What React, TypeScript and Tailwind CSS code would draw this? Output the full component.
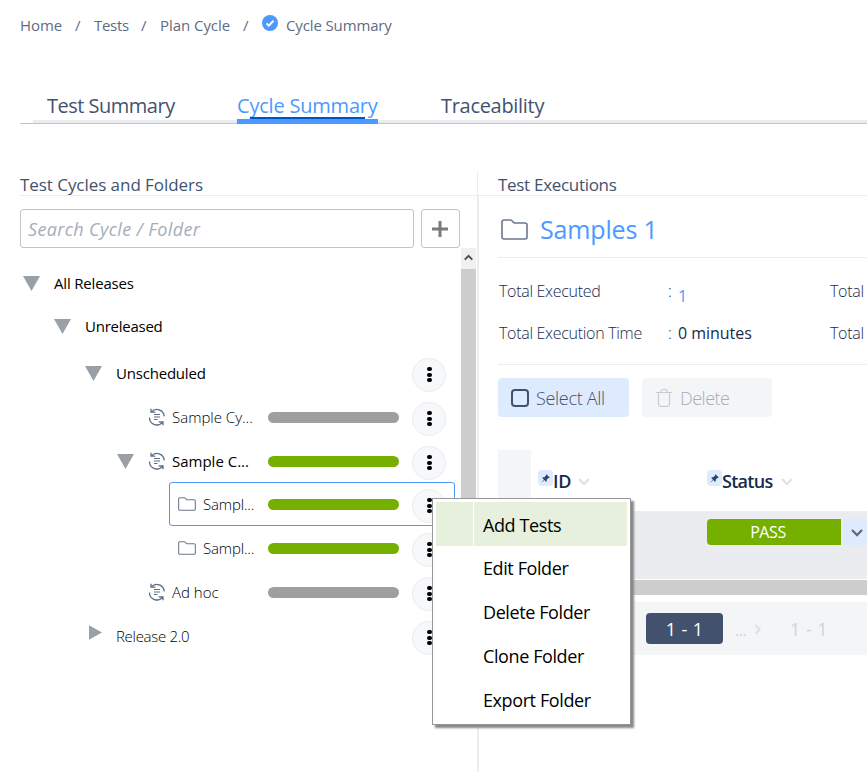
import React from 'react';
import { BsPinAngleFill } from 'react-icons/bs';

type Kind = 'plain' | 'cycle' | 'folder';

interface TreeRow {
  label: string;
  kind: Kind;
  row: string;
  text: string;
  arrow?: 'down' | 'right';
  bar?: string;
  menu?: boolean;
  selected?: boolean;
}

const rows: TreeRow[] = [
  { label: 'All Releases', kind: 'plain', arrow: 'down', row: 'h-11 pl-[23px]', text: 'tracking-[-0.18px]' },
  { label: 'Unreleased', kind: 'plain', arrow: 'down', row: 'h-[42px] pl-[54px]', text: 'tracking-[-0.25px]' },
  { label: 'Unscheduled', kind: 'plain', arrow: 'down', row: 'mt-1 h-11 pl-[85px]', text: 'tracking-[-0.2px]', menu: true },
  { label: 'Sample Cy...', kind: 'cycle', row: 'h-11 pl-[117px]', text: 'font-light', bar: 'bg-[#9f9f9f]', menu: true },
  { label: 'Sample C...', kind: 'cycle', arrow: 'down', row: 'h-11 pl-[117px]', text: '', bar: 'bg-[#75b000]', menu: true },
  { label: 'Sampl...', kind: 'folder', row: '-mt-px h-11 pl-[148px]', text: 'font-light tracking-[-0.15px]', bar: 'bg-[#75b000]', menu: true, selected: true },
  { label: 'Sampl...', kind: 'folder', row: 'h-11 pl-[148px]', text: 'font-light tracking-[-0.15px]', bar: 'bg-[#75b000]', menu: true },
  { label: 'Ad hoc', kind: 'cycle', row: 'h-11 pl-[117px]', text: 'font-light', bar: 'bg-[#9f9f9f]', menu: true },
  { label: 'Release 2.0', kind: 'plain', arrow: 'right', row: 'h-11 pl-[85px]', text: 'font-light tracking-[-0.3px]', menu: true },
];

const menuItems = ['Add Tests', 'Edit Folder', 'Delete Folder', 'Clone Folder', 'Export Folder'];

const FolderIcon: React.FC<{ className: string; stroke: number }> = ({ className, stroke }) => (
  <svg className={className} viewBox="0 0 27 21" fill="none" stroke="#6b778c" strokeWidth={stroke} strokeLinejoin="round">
    <path d="M1 3a2 2 0 0 1 2-2h6.500c1 0 1.500.5 2 1.300l.8 1c.5.600 1 .7 1.700.7H24a2 2 0 0 1 2 2v12a2 2 0 0 1-2 2H3a2 2 0 0 1-2-2z" />
  </svg>
);

const CycleIcon: React.FC = () => (
  <svg className="h-[18px] w-[18px] shrink-0" viewBox="0 0 18 18" fill="none" stroke="#5e6c84" strokeWidth="1.3">
    <path d="M3 .8v3.400h4.400M3.300 4.100A7.300 7.300 0 0 1 16.200 8.400M15 17.200v-3.400h-4.400M14.700 13.900A7.300 7.300 0 0 1 1.500 9.500" />
    <path d="M6 6.500h6M6 9h6M6 11.500h3.500" strokeWidth="1.200" />
  </svg>
);

const Arrow: React.FC<{ dir?: 'down' | 'right' }> = ({ dir }) => (
  <span className="flex w-[17px] shrink-0 justify-center">
    {dir === 'down' && (
      <svg className="h-[15px] w-[17px]" viewBox="0 0 17 15" fill="#9aa0a6"><path d="M0 0h17L8.500 15z" /></svg>
    )}
    {dir === 'right' && (
      <svg className="-mt-2 ml-1 h-[17px] w-[15px]" viewBox="0 0 15 17" fill="#9aa0a6"><path d="M0 0v17l15-8.500z" /></svg>
    )}
  </span>
);

const Chevron: React.FC<{ className: string; color: string; d?: string; width?: number }> = ({
  className,
  color,
  d = 'M1 2l5 5 5-5',
  width = 2,
}) => (
  <svg className={className} viewBox="0 0 12 9" fill="none" stroke={color} strokeWidth={width}>
    <path d={d} />
  </svg>
);

const Pin: React.FC = () => (
  <span className="-mt-1.5 flex h-4 w-[15px] shrink-0 items-center justify-center rounded-sm bg-[#deebff]">
    <BsPinAngleFill className="h-[9px] w-[9px] text-[#344563]" />
  </span>
);

const TreeItem: React.FC<{ item: TreeRow }> = ({ item }) => (
  <div className={`relative flex items-center ${item.row}`}>
    {item.selected && <div className="absolute inset-y-0 left-[169px] w-[286px] rounded-[3px] border border-[#4c9aff]" />}
    <Arrow dir={item.arrow} />
    {item.kind === 'plain' && <span className="w-[14px] shrink-0" />}
    {item.kind === 'cycle' && <span className="ml-[14px] mr-1.5 shrink-0"><CycleIcon /></span>}
    {item.kind === 'folder' && <FolderIcon className="ml-[13px] mr-[7px] h-[14px] w-[18px] shrink-0" stroke={1.6} />}
    <span className={`whitespace-nowrap text-[15px] text-black ${item.text}`}>{item.label}</span>
    <div className="ml-auto flex items-center pr-[31px]">
      {item.bar && <div className={`mr-[13px] h-[11px] w-[131px] rounded-full ${item.bar}`} />}
      {item.menu && (
        <div className="mt-[3px] flex h-[34px] w-[34px] flex-col items-center justify-center gap-[1.500px] rounded-full border border-[#ebecf0] bg-[#f7f8fa] pl-px">
          <i className="h-1 w-[5px] rounded-full bg-black" />
          <i className="h-1 w-[5px] rounded-full bg-black" />
          <i className="h-1 w-[5px] rounded-full bg-black" />
        </div>
      )}
    </div>
  </div>
);

const Header: React.FC = () => (
  <header className="h-[172px]">
    <div className="flex h-[50px] items-center pl-5 text-[15px] text-[#5e6c84]">
      <span className="w-[55px] tracking-[-0.1px]">Home</span>
      <span className="w-[19px]">/</span>
      <span className="w-[47px] tracking-[-0.3px]">Tests</span>
      <span className="w-[19px]">/</span>
      <span className="w-[83px] whitespace-nowrap tracking-[-0.05px]">Plan Cycle</span>
      <span className="w-[19px]">/</span>
      <svg className="mb-1 mr-2 h-4 w-4" viewBox="0 0 16 16">
        <circle cx="8" cy="8" r="8" fill="#4c9aff" />
        <path d="M4.500 8.500l2.300 2.200 4.700-4.900" fill="none" stroke="#fff" strokeWidth="2" />
      </svg>
      <span className="whitespace-nowrap tracking-[-0.13px]">Cycle Summary</span>
    </div>
    <nav className="ml-5 mt-[38px] h-9 border-b border-[#c4c4c4]">
      <div className="ml-[13px] flex h-[35px] border-b-[3px] border-[#ebecf0] pl-[13px] text-xl leading-[36px] text-[#42526e]">
        <span className="w-[191px] whitespace-nowrap pl-px tracking-[-0.5px]">Test Summary</span>
        <span className="relative mr-[63px] h-9 w-[141px] whitespace-nowrap tracking-[-0.2px] text-[#4c9aff]">
          Cycle Summary
          <span className="absolute inset-x-0 bottom-0 h-[5px] bg-[#4c9aff]" />
          <span className="absolute bottom-[5px] left-[13px] h-0.5 w-[115px] bg-[#0052cc]" />
        </span>
        <span className="tracking-[-0.3px]">Traceability</span>
      </div>
    </nav>
  </header>
);

const CyclePanel: React.FC = () => (
  <section className="w-[477px] shrink-0">
    <h2 className="ml-5 h-6 whitespace-nowrap border-b border-[#ebecf0] text-[17px] leading-[26px] tracking-[-0.05px] text-[#42526e]">
      Test Cycles and Folders
    </h2>
    <div className="mt-[13px] flex gap-[7px] pl-5">
      <div className="h-[39px] w-[394px] rounded-[3px] border border-[#c4c4c4] pl-[7px] text-lg italic leading-[39px] tracking-[0.37px] text-[#a5adba]">
        Search Cycle / Folder
      </div>
      <div className="flex h-[39px] w-[39px] items-center justify-center rounded-[3px] border border-[#c4c4c4]">
        <svg className="mr-0.5 h-4 w-4" viewBox="0 0 16 16" stroke="#7a7a7a" strokeWidth="3"><path d="M8 0v16M0 8h16" /></svg>
      </div>
    </div>
    <div className="flex">
      <div className="w-[461px] shrink-0 pt-[13px]">
        <div className="-mr-4">
          {rows.map((item, i) => (
            <TreeItem key={i} item={item} />
          ))}
        </div>
      </div>
      <div className="h-[400px] w-[15px] shrink-0 bg-[#cdcdcd]">
        <div className="flex h-[21px] items-center justify-center bg-[#f0f0f0]">
          <Chevron className="mb-1 h-[8px] w-[9px]" color="#505050" d="M1 8l5-5 5 5" width={2.8} />
        </div>
      </div>
    </div>
  </section>
);

const Executions: React.FC = () => (
  <section className="min-w-0 flex-1">
    <h2 className="h-6 border-b border-l border-[#ebecf0] pl-5 text-[17px] leading-[26px] tracking-[-0.3px] text-[#42526e]">
      Test Executions
    </h2>
    <div className="h-[576px] border-l-2 border-[#ebecf0] pl-[19px]">
      <div className="flex h-[62px] items-center border-b border-[#ebecf0] pl-[3px]">
        <FolderIcon className="mr-3 mt-1.5 h-[21px] w-[27px]" stroke={1.6} />
        <span className="mt-1.5 text-[25px] tracking-[-0.15px] text-[#4c9aff]">Samples 1</span>
      </div>
      <div className="h-[107px] border-b border-[#ebecf0] pt-3 text-base font-light text-[#172b4d]">
        {['Total Executed', 'Total Execution Time'].map((label, i) => (
          <div key={label} className="flex h-[42px] items-center whitespace-nowrap">
            <span className="w-[170px] shrink-0 pl-px tracking-[-0.3px]">{label}</span>
            <span className="w-[10px] shrink-0">:</span>
            {i === 0 ? (
              <span className="mt-[9px] w-[152px] shrink-0 font-normal text-[#4c9aff]">1</span>
            ) : (
              <span className="w-[152px] shrink-0 font-normal tracking-[-0.03px]">0 minutes</span>
            )}
            <span className="tracking-[-0.3px]">Total</span>
          </div>
        ))}
      </div>
      <div className="mt-[13px] flex gap-[13px] text-lg font-light">
        <div className="flex h-[39px] w-[131px] items-center rounded bg-[#deebff] pl-[13px] tracking-[-0.3px] text-[#42526e]">
          <span className="mr-[7px] h-[18px] w-[18px] rounded border-2 border-[#42526e]" />
          Select All
        </div>
        <div className="flex h-[39px] w-[130px] items-center rounded bg-[#f4f5f7] pl-[14px] tracking-[-0.5px] text-[#a5adba]">
          <svg className="mr-2 h-[18px] w-4" viewBox="0 0 16 18" fill="none" stroke="#c7cbd2" strokeWidth="1.200">
            <path d="M0 3.500h16M5 3.500V2.500a2 2 0 0 1 2-2h2a2 2 0 0 1 2 2v1M2.500 3.500V15a2.300 2.300 0 0 0 2.300 2.400h6.400a2.300 2.300 0 0 0 2.300-2.400V3.500" />
          </svg>
          Delete
        </div>
      </div>
      <div className="mt-[33px] flex h-[61px] text-lg font-semibold text-[#172b4d]">
        <div className="w-[33px] bg-[#f4f5f7]" />
        <div className="flex w-[176px] items-center pl-[7px] pt-px">
          <Pin />
          <span className="tracking-[-0.3px]">ID</span>
          <Chevron className="ml-[7px] h-[9px] w-3" color="#dfe1e6" />
        </div>
        <div className="flex items-center pt-px">
          <Pin />
          <span className="tracking-[-0.7px]">Status</span>
          <Chevron className="ml-2 h-[9px] w-3" color="#dfe1e6" />
        </div>
      </div>
      <div className="flex h-[68px] bg-[#ebecf0] pl-[209px] pt-2">
        <div className="flex h-[26px] w-[134px] items-center justify-center rounded-l bg-[#75b000] pr-3 text-base tracking-[-0.4px] text-white">
          PASS
        </div>
        <div className="ml-[3px] flex h-[26px] flex-1 items-center bg-[#deebff] pl-[7px]">
          <Chevron className="h-[9px] w-3" color="#5e6c84" width={2.3} />
        </div>
      </div>
      <div className="mt-px h-[15px] bg-[#cdcdcd]" />
      <div className="mt-[7px] flex h-[53px] items-center bg-[#f4f5f7] pl-[148px] text-lg text-[#cfd3da]">
        <div className="h-[31px] w-[77px] rounded bg-[#42526e] text-center leading-[32px] tracking-[0.4px] text-white">1 - 1</div>
        <span className="ml-3 mt-0.5 text-base leading-none tracking-[-0.5px]">...</span>
        <Chevron className="ml-1.5 mt-0.5 h-[11px] w-3" color="#dfe1e6" d="M3.500 0l4 4.500-4 4.500" width={2.3} />
        <span className="ml-[26px] tracking-[0.4px]">1 - 1</span>
      </div>
    </div>
  </section>
);

const FolderMenu: React.FC = () => (
  <div className="absolute left-[432px] top-[498px] h-[227px] w-[199px] border border-[#979797] bg-white p-[3px] shadow-[3px_3px_2px_#888]">
    {menuItems.map((label, i) => (
      <div key={label} className={`flex h-11 items-center text-lg text-black ${i === 0 ? 'bg-[#e6f0dc]' : ''}`}>
        <span className="h-full w-[38px] border-r border-white" />
        <span className={`whitespace-nowrap pl-[9px] tracking-[-0.4px] ${i === 0 ? 'pt-0.5' : ''}`}>{label}</span>
      </div>
    ))}
  </div>
);

export default function App() {
  return (
    <main className="relative h-[772px] w-[867px] overflow-hidden bg-white font-['Open_Sans','Noto_Sans',sans-serif]">
      <Header />
      <div className="flex">
        <CyclePanel />
        <Executions />
      </div>
      <FolderMenu />
    </main>
  );
}
